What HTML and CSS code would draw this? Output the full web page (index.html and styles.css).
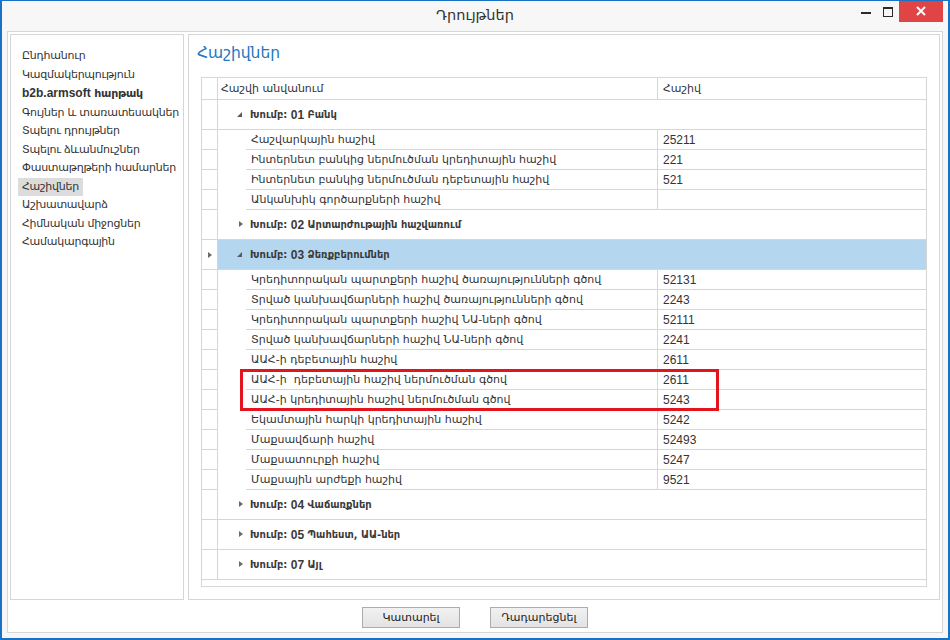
FILE: index.html
```html
<!DOCTYPE html>
<html lang="hy">
<head>
<meta charset="utf-8">
<title>Դրույթներ</title>
<link rel="stylesheet" href="styles.css">
</head>
<body>
<div class="window">
  <div class="titlebar">
    <div class="title">Դրույթներ</div>
    <div class="controls">
      <div class="ctl"><svg width="22" height="21" viewBox="0 0 22 21"><rect x="6" y="11" width="10" height="2" fill="#2b2b2b"/></svg></div>
      <div class="ctl"><svg width="22" height="21" viewBox="0 0 22 21"><rect x="6.5" y="6.5" width="9" height="9" fill="none" stroke="#2b2b2b"/><rect x="6" y="6" width="10" height="2" fill="#2b2b2b"/></svg></div>
      <div class="ctl close"><svg width="44" height="21" viewBox="0 0 44 21"><path d="M18 6 L26 14 M26 6 L18 14" stroke="#fff" stroke-width="2" fill="none"/></svg></div>
    </div>
  </div>
  <div class="frame">
    <div class="panels">
      <nav class="nav">
        <div class="nav-item">Ընդհանուր</div>
        <div class="nav-item">Կազմակերպություն</div>
        <div class="nav-item bold"><span class="latin">b2b.armsoft</span> հարթակ</div>
        <div class="nav-item">Գույներ և տառատեսակներ</div>
        <div class="nav-item">Տպելու դրույթներ</div>
        <div class="nav-item">Տպելու ձևանմուշներ</div>
        <div class="nav-item">Փաստաթղթերի համարներ</div>
        <div class="nav-item"><span class="sel">Հաշիվներ</span></div>
        <div class="nav-item">Աշխատավարձ</div>
        <div class="nav-item">Հիմնական միջոցներ</div>
        <div class="nav-item">Համակարգային</div>
      </nav>
      <section class="content">
        <h1 class="heading">Հաշիվներ</h1>
        <div class="grid">
          <div class="row head"><div class="ind"></div><div class="h-name">Հաշվի անվանում</div><div class="c-val arm">Հաշիվ</div></div>

          <div class="row group"><div class="ind"></div><div class="g-body"><span class="arrow open"></span>Խումբ: <span class="num">01</span> Բանկ</div></div>
          <div class="row data"><div class="ind"></div><div class="indent"></div><div class="c-name">Հաշվարկային հաշիվ</div><div class="c-val">25211</div></div>
          <div class="row data"><div class="ind"></div><div class="indent"></div><div class="c-name">Ինտերնետ բանկից ներմուծման կրեդիտային հաշիվ</div><div class="c-val">221</div></div>
          <div class="row data"><div class="ind"></div><div class="indent"></div><div class="c-name">Ինտերնետ բանկից ներմուծման դեբետային հաշիվ</div><div class="c-val">521</div></div>
          <div class="row data"><div class="ind"></div><div class="indent"></div><div class="c-name">Անկանխիկ գործարքների հաշիվ</div><div class="c-val"></div></div>

          <div class="row group"><div class="ind"></div><div class="g-body"><span class="arrow closed"></span>Խումբ: <span class="num">02</span> Արտարժութային հաշվառում</div></div>

          <div class="row group selected"><div class="ind"><span class="ind-arrow"></span></div><div class="g-body"><span class="arrow open"></span>Խումբ: <span class="num">03</span> Ձեռքբերումներ</div></div>
          <div class="row data"><div class="ind"></div><div class="indent"></div><div class="c-name">Կրեդիտորական պարտքերի հաշիվ ծառայությունների գծով</div><div class="c-val">52131</div></div>
          <div class="row data"><div class="ind"></div><div class="indent"></div><div class="c-name">Տրված կանխավճարների հաշիվ ծառայությունների գծով</div><div class="c-val">2243</div></div>
          <div class="row data"><div class="ind"></div><div class="indent"></div><div class="c-name">Կրեդիտորական պարտքերի հաշիվ ՆԱ-ների գծով</div><div class="c-val">52111</div></div>
          <div class="row data"><div class="ind"></div><div class="indent"></div><div class="c-name">Տրված կանխավճարների հաշիվ ՆԱ-ների գծով</div><div class="c-val">2241</div></div>
          <div class="row data"><div class="ind"></div><div class="indent"></div><div class="c-name">ԱԱՀ-ի դեբետային հաշիվ</div><div class="c-val">2611</div></div>
          <div class="row data"><div class="ind"></div><div class="indent"></div><div class="c-name">ԱԱՀ-ի &nbsp;դեբետային հաշիվ ներմուծման գծով</div><div class="c-val">2611</div></div>
          <div class="row data"><div class="ind"></div><div class="indent"></div><div class="c-name">ԱԱՀ-ի կրեդիտային հաշիվ ներմուծման գծով</div><div class="c-val">5243</div></div>
          <div class="row data"><div class="ind"></div><div class="indent"></div><div class="c-name">Եկամտային հարկի կրեդիտային հաշիվ</div><div class="c-val">5242</div></div>
          <div class="row data"><div class="ind"></div><div class="indent"></div><div class="c-name">Մաքսավճարի հաշիվ</div><div class="c-val">52493</div></div>
          <div class="row data"><div class="ind"></div><div class="indent"></div><div class="c-name">Մաքսատուրքի հաշիվ</div><div class="c-val">5247</div></div>
          <div class="row data"><div class="ind"></div><div class="indent"></div><div class="c-name">Մաքսային արժեքի հաշիվ</div><div class="c-val">9521</div></div>

          <div class="row group"><div class="ind"></div><div class="g-body"><span class="arrow closed"></span>Խումբ: <span class="num">04</span> Վաճառքներ</div></div>
          <div class="row group"><div class="ind"></div><div class="g-body"><span class="arrow closed"></span>Խումբ: <span class="num">05</span> Պահեստ, ԱԱ-ներ</div></div>
          <div class="row group"><div class="ind"></div><div class="g-body"><span class="arrow closed"></span>Խումբ: <span class="num">07</span> Այլ</div></div>
          <div class="foot"></div>
          <div class="mark"></div>
        </div>
      </section>
    </div>
    <div class="buttons">
      <button class="btn">Կատարել</button>
      <button class="btn">Դադարեցնել</button>
    </div>
  </div>
</div>
</body>
</html>
```

FILE: styles.css
```css
html, body {
  margin: 0;
  padding: 0;
  background: #ffffff;
}

body {
  font-family: "DejaVu Sans", sans-serif;
  font-size: 11px;
  color: #333;
}

.window {
  width: 950px;
  height: 640px;
  box-sizing: border-box;
  border: 2px solid #1a72c4;
  border-top-width: 1px;
  background: #f7f7f7;
  display: flex;
  flex-direction: column;
}

.titlebar {
  height: 30px;
  flex: none;
  display: grid;
  grid-template-columns: 1fr auto 1fr;
  align-items: start;
}

.title {
  grid-column: 2;
  line-height: 29px;
  font-size: 14.5px;
  color: #333;
}

.controls {
  grid-column: 3;
  justify-self: end;
  display: flex;
  margin-right: 5px;
}

.ctl {
  width: 22px;
  height: 21px;
}

.ctl svg {
  display: block;
}

.ctl.close {
  width: 44px;
  background: #e04444;
}

.frame {
  flex: 1;
  margin: 0 5px 5px;
  border: 1px solid #d6d6d6;
  background: #ffffff;
  display: flex;
  flex-direction: column;
}

.panels {
  display: flex;
  gap: 4px;
  padding: 2px 2px 0;
  height: 566px;
}

.nav {
  width: 174px;
  box-sizing: border-box;
  border: 1px solid #d6d6d6;
  padding: 12px 0 0 7px;
  letter-spacing: -0.25px;
}

.nav-item {
  line-height: 18.5px;
  padding-left: 4px;
  white-space: nowrap;
}

.nav-item.bold {
  font-weight: bold;
}

.latin,
.num {
  font-family: "Liberation Sans", sans-serif;
  letter-spacing: 0;
}

.nav-item .latin {
  font-size: 12px;
}

.sel {
  display: inline-block;
  background: #dcdcdc;
  margin-left: -4px;
  padding: 0 4px;
}

.content {
  flex: 1;
  box-sizing: border-box;
  border: 1px solid #d6d6d6;
  display: flex;
  flex-direction: column;
}

.heading {
  margin: 0;
  padding: 6px 0 0 8px;
  font-size: 15.5px;
  line-height: 24px;
  font-weight: normal;
  color: #2277c2;
}

.grid {
  position: relative;
  margin: 12px 12px 0;
  border: 1px solid #d6d6d6;
}

.row {
  display: flex;
  height: 20px;
}

.row > div {
  box-sizing: border-box;
}

.row.head {
  height: 22px;
}

.row.group {
  height: 30px;
}

.ind {
  width: 16px;
  flex: none;
  border-right: 1px solid #d6d6d6;
  border-bottom: 1px solid #d6d6d6;
  display: flex;
  align-items: center;
  justify-content: center;
}

.indent {
  width: 28px;
  flex: none;
}

.h-name {
  width: 440px;
  flex: none;
  border-right: 1px solid #d6d6d6;
  border-bottom: 1px solid #d6d6d6;
  padding-left: 3px;
  display: flex;
  align-items: center;
}

.c-name {
  width: 412px;
  flex: none;
  border-right: 1px solid #d6d6d6;
  border-bottom: 1px solid #d6d6d6;
  padding-left: 5px;
  display: flex;
  align-items: center;
  white-space: pre;
}

.c-val {
  flex: 1;
  border-bottom: 1px solid #d6d6d6;
  padding-left: 5px;
  display: flex;
  align-items: center;
  font-family: "Liberation Sans", sans-serif;
  font-size: 12px;
}

.c-val.arm {
  font-family: "DejaVu Sans", sans-serif;
  font-size: 11px;
}

.g-body {
  flex: 1;
  border-bottom: 1px solid #d6d6d6;
  display: flex;
  align-items: center;
  padding-left: 19px;
  font-family: "DejaVu Sans Condensed", "DejaVu Sans", sans-serif;
  font-weight: bold;
  font-size: 11px;
  color: #3a3a3a;
  white-space: pre;
}

.g-body .num {
  font-size: 12px;
}

.row.selected .g-body {
  background: #b5d6ef;
}

.arrow {
  width: 13px;
  height: 8px;
  flex: none;
  position: relative;
}

.arrow.open::before {
  content: "";
  position: absolute;
  left: 0;
  top: 1px;
  width: 0;
  height: 0;
  border-style: solid;
  border-width: 0 0 5px 5px;
  border-color: transparent transparent #5a5a5a transparent;
}

.arrow.closed::before {
  content: "";
  position: absolute;
  left: 2px;
  top: 0;
  width: 0;
  height: 0;
  border-style: solid;
  border-width: 3.5px 0 3.5px 4px;
  border-color: transparent transparent transparent #6a6a6a;
}

.ind-arrow {
  width: 0;
  height: 0;
  border-style: solid;
  border-width: 3.5px 0 3.5px 4px;
  border-color: transparent transparent transparent #6a6a6a;
}

.foot {
  height: 6px;
}

.mark {
  position: absolute;
  left: 38px;
  top: 291px;
  width: 479px;
  height: 42px;
  box-sizing: border-box;
  border: 3px solid #e3141e;
}

.buttons {
  display: flex;
  justify-content: center;
  gap: 30px;
  padding-top: 7px;
}

.btn {
  width: 98px;
  height: 21px;
  box-sizing: border-box;
  border: 1px solid #acacac;
  border-radius: 0;
  background: linear-gradient(#f1f1f1, #e3e3e3);
  font-family: "DejaVu Sans", sans-serif;
  font-size: 11px;
  color: #222;
  padding: 0;
}
```
